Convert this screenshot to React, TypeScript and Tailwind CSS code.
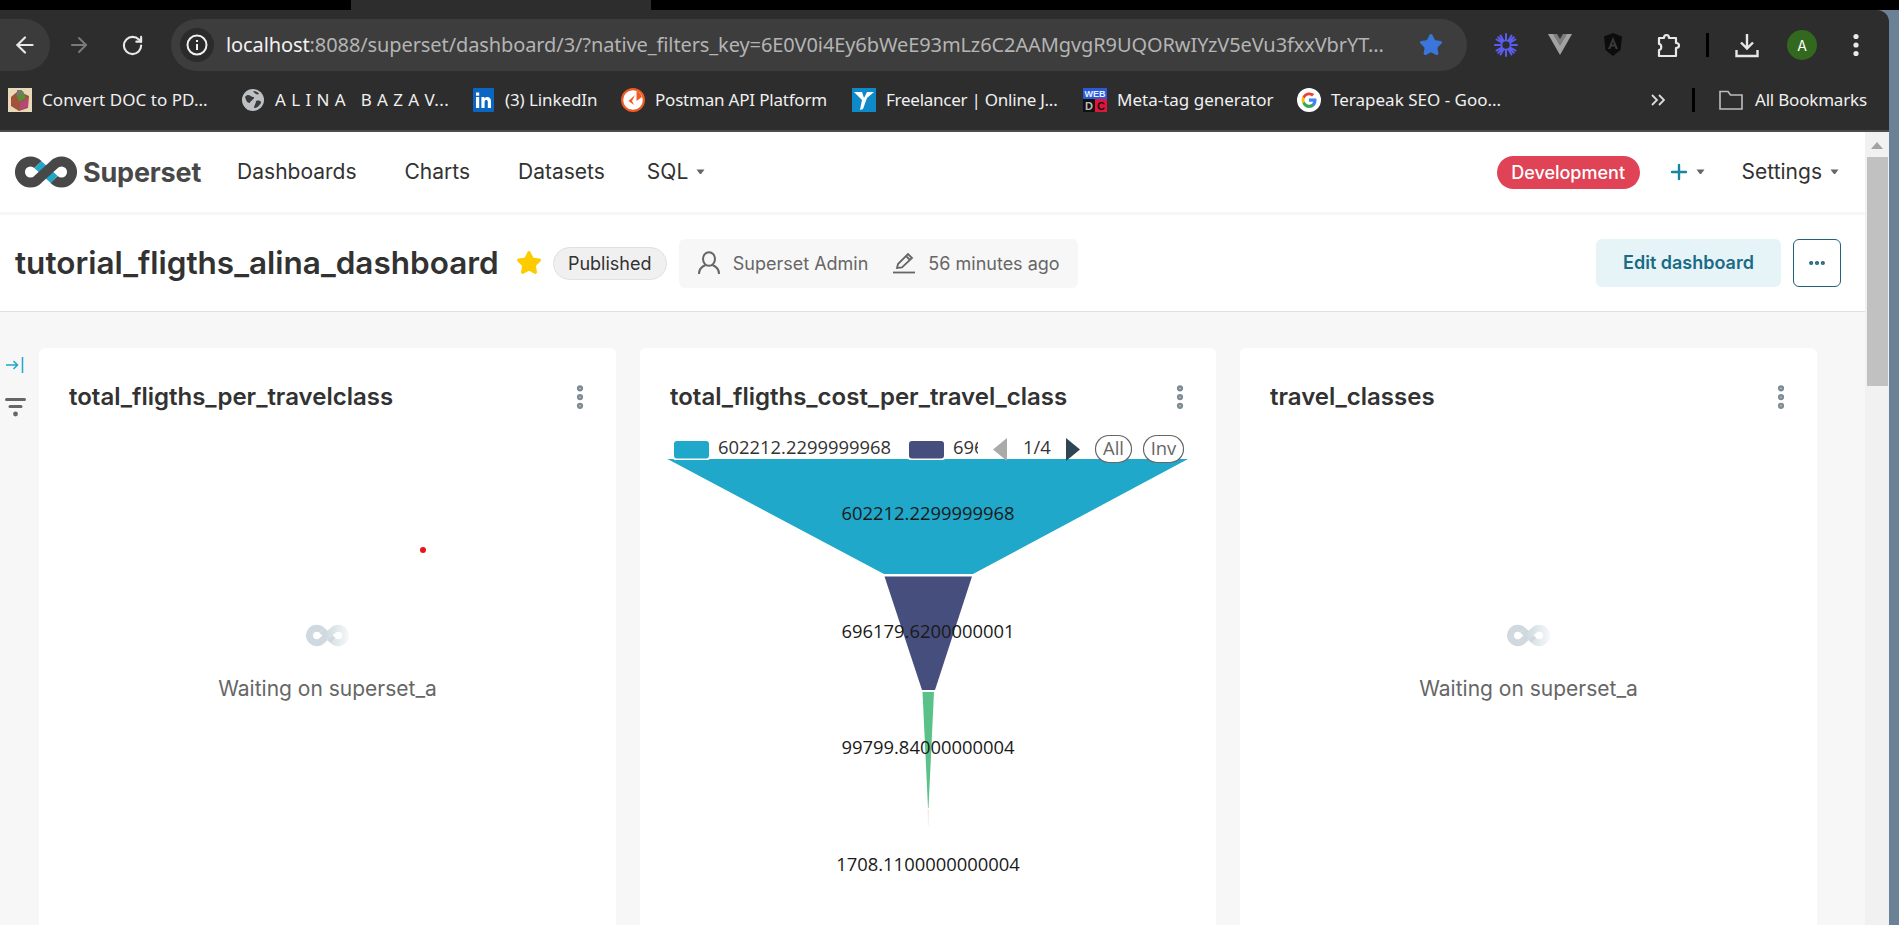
import React from "react";
import { ArrowLeft, ArrowRight, RotateCw, Star, EllipsisVertical, Plus, Ellipsis } from "lucide-react";

const Caret = ({ className = "" }: { className?: string }) => (
  <svg width="9" height="6" viewBox="0 0 9 6" className={className}>
    <path d="M0.5 0.5 H8.5 L5.5 4.6 Q4.5 5.6 3.5 4.6 Z" fill="#666" />
  </svg>
);

const Logo = ({ w, h, fade, id }: { w: number; h: number; fade?: boolean; id: string }) => (
  <svg width={w} height={h} viewBox="0 0 62 32" className="shrink-0">
    <defs>
      <linearGradient id={id} x1="0" x2="62" y1="0" y2="0" gradientUnits="userSpaceOnUse">
        <stop offset="0.45" stopColor="#cfd9df" />
        <stop offset="1" stopColor="#f6f8f9" />
      </linearGradient>
    </defs>
    <path d="M22.9 8.6 L39.1 23.4" stroke={fade ? "#cfd9df" : "#20a7c9"} strokeWidth="10" fill="none" />
    <path
      d="M22.9 8.6 A10.5 10.5 0 1 0 22.9 23.4 L39.1 8.6 A10.5 10.5 0 1 1 39.1 23.4"
      stroke={fade ? `url(#${id})` : "#484848"}
      strokeWidth="10"
      fill="none"
    />
  </svg>
);

const Bookmark = ({ icon, text, className, textClass = "tracking-[-0.1px]" }: { icon: React.ReactNode; text: string; className: string; textClass?: string }) => (
  <div className={`flex items-center shrink-0 ${className}`}>
    <span className="w-[24px] h-[24px] shrink-0 flex items-center justify-center">{icon}</span>
    <span className={`ml-[10px] text-[17px] text-[#f0f0f0] whitespace-pre font-['Noto_Sans',sans-serif] ${textClass}`}>{text}</span>
  </div>
);

const DocIcon = () => (
  <svg width="24" height="24" viewBox="0 0 24 24">
    <rect width="24" height="24" fill="#e8d9b8" />
    <path d="M3 9 L10 3 L21 8 L20 20 L11 23 L3 18 Z" fill="#a0523a" />
    <path d="M8 6 L15 3 L18 10 L11 14 Z" fill="#5b8d3a" />
    <path d="M12 15 L20 10 L20 19 L12 22 Z" fill="#b5477a" />
    <path d="M9 2 h5 v5 h-5z" fill="#777" />
  </svg>
);
const GlobeIcon = () => (
  <svg width="22" height="22" viewBox="0 0 22 22">
    <circle cx="11" cy="11" r="11" fill="#bdc1c6" />
    <path d="M3 8 C7 3 9 9 12 8 C13 10 8 12 8 14 C5 14 4 11 3 8Z M14 12 C18 11 19 12 19 14 C17 17 15 19 12 19 C12 16 14 15 14 12Z M11 2 C13 2 16 3 17 5 C15 6 13 5 11 2Z" fill="#3a3a3a" />
  </svg>
);
const LinkedIcon = () => (
  <svg width="21" height="24" viewBox="0 0 21 24">
    <rect width="21" height="24" rx="1" fill="#0a66c2" />
    <rect x="3" y="9" width="3.2" height="11" fill="#fff" />
    <rect x="3" y="4.5" width="3.2" height="3.2" fill="#fff" />
    <path d="M8.4 9 h3 v1.6 c1.8 -2.6 6.6 -2 6.6 2.6 V20 h-3.2 v-6 c0 -2.6 -3.2 -2.4 -3.2 0 v6 h-3.2z" fill="#fff" />
  </svg>
);
const PostmanIcon = () => (
  <svg width="24" height="24" viewBox="0 0 24 24">
    <circle cx="12" cy="12" r="12" fill="#ef5b25" />
    <circle cx="12" cy="12" r="9.8" fill="#fff" />
    <path d="M15.5 3 A9.6 9.6 0 0 1 21 9 L15.5 13 Z" fill="#ef5b25" />
    <path d="M14 7 L7.5 13 L13 17 L11 13 Z" fill="#ef5b25" />
  </svg>
);
const FreelancerIcon = () => (
  <svg width="24" height="24" viewBox="0 0 24 24">
    <rect width="24" height="24" fill="#0e8ac8" />
    <path d="M2 4 H10 L12 10 L15 4 H22 L15 10 L11 21 L8 22 L10 12 Z" fill="#fff" />
  </svg>
);
const WebIcon = () => (
  <svg width="24" height="24" viewBox="0 0 24 24">
    <rect width="24" height="11" fill="#2a5bd7" />
    <rect y="11" width="12" height="13" fill="#111" />
    <rect x="12" y="11" width="12" height="13" fill="#e0143c" />
    <text x="12" y="9" fontSize="9" fontWeight="700" fill="#e8eeff" textAnchor="middle" fontFamily="Liberation Sans">WEB</text>
    <text x="6" y="22" fontSize="11" fontWeight="700" fill="#bbb" textAnchor="middle" fontFamily="Liberation Sans">D</text>
    <text x="18" y="22" fontSize="11" fontWeight="700" fill="#111" textAnchor="middle" fontFamily="Liberation Sans">C</text>
  </svg>
);
const GoogleIcon = () => (
  <svg width="24" height="24" viewBox="0 0 24 24">
    <circle cx="12" cy="12" r="12" fill="#fff" />
    <path d="M19.5 12.2c0-.6-.1-1.1-.2-1.6H12v3.1h4.2a3.6 3.6 0 0 1-1.6 2.4v2h2.6c1.5-1.4 2.3-3.4 2.3-5.9z" fill="#4285f4" />
    <path d="M12 20c2.2 0 4-.7 5.2-1.9l-2.6-2c-.7.5-1.5.7-2.6.7-2 0-3.7-1.4-4.3-3.2H5.6v2.1A8 8 0 0 0 12 20z" fill="#34a853" />
    <path d="M7.7 13.6a4.7 4.7 0 0 1 0-3.2V8.3H5.6a8 8 0 0 0 0 7.4z" fill="#fbbc05" />
    <path d="M12 7.2c1.2 0 2.2.4 3 1.2l2.3-2.3A8 8 0 0 0 5.6 8.3l2.1 2.1C8.3 8.6 10 7.2 12 7.2z" fill="#ea4335" />
  </svg>
);

const Burst = () => (
  <svg width="24" height="24" viewBox="0 0 24 24" stroke="#5a5cf0" strokeWidth="2" strokeLinecap="round" fill="none">
    <circle cx="12" cy="12" r="4.6" strokeWidth="1.8" />
    <path d="M12 1v6M12 17v6M1 12h6M17 12h6M4.2 4.2l4.2 4.2M15.6 15.6l4.2 4.2M19.8 4.2l-4.2 4.2M8.4 15.6l-4.2 4.2M6.5 2.5l2.7 4.8M14.8 16.7l2.7 4.8M17.5 2.5l-2.7 4.8M9.2 16.7l-2.7 4.8M2.5 6.5l4.8 2.7M16.7 14.8l4.8 2.7M21.5 6.5l-4.8 2.7M7.3 14.8l-4.8 2.7" />
  </svg>
);
const VueIcon = () => (
  <svg width="24" height="22" viewBox="0 0 24 22">
    <path d="M0 0 H24 L12 21 Z" fill="#a2a2a2" />
    <path d="M5 0 H19 L12 12 Z" fill="#7c7c7c" />
    <path d="M9 0 H15 L12 5 Z" fill="#333" />
  </svg>
);
const AngularIcon = () => (
  <svg width="20" height="24" viewBox="0 0 20 24">
    <path d="M10 0 L19 3.5 L17.5 17 L10 23 L2.5 17 L1 3.5 Z" fill="#0c0c0c" />
    <path d="M10 4 L15 16 H12.6 L11.6 13.5 H8.4 L7.4 16 H5 Z M10 8.5 L9 11.5 H11 Z" fill="#3a3a3a" fillRule="evenodd" />
  </svg>
);
const PuzzleIcon = () => (
  <svg width="25" height="25" viewBox="0 0 25 25" fill="none" stroke="#e8e8e8" strokeWidth="2.2" strokeLinejoin="round">
    <path d="M3 5 H8 C8 1 13 1 13 5 H20 V10 C24 10 24 15 20 15 V23 H3 V17 C6 17 6 11 3 11 Z" />
  </svg>
);
const DownloadIcon = () => (
  <svg width="24" height="25" viewBox="0 0 24 25" fill="none" stroke="#e8e8e8" strokeWidth="2.4">
    <path d="M12 1 V15 M6 9.5 L12 15.5 L18 9.5" />
    <path d="M1.5 17 V23 H22.5 V17" />
  </svg>
);
const FolderIcon = () => (
  <svg width="24" height="20" viewBox="0 0 24 20" fill="none" stroke="#bdbdbd" strokeWidth="1.6">
    <path d="M1 1.5 H9 L11.5 5 H23 V19 H1 Z" />
  </svg>
);
const ChevronsIcon = () => (
  <svg width="14" height="12" viewBox="0 0 14 12" fill="none" stroke="#dcdcdc" strokeWidth="1.8">
    <path d="M1 1 L6 6 L1 11 M8 1 L13 6 L8 11" />
  </svg>
);

const ExpandIcon = () => (
  <svg width="18" height="16" viewBox="0 0 18 16" fill="none" stroke="#20a7c9" strokeWidth="1.5">
    <path d="M0 8 H11 M7.5 4 L11.5 8 L7.5 12" />
    <path d="M16.5 0 V16" />
  </svg>
);
const FilterIcon = () => (
  <svg width="21" height="19" viewBox="0 0 21 19" fill="#666">
    <rect width="21" height="3" rx="1.5" />
    <rect x="3.5" y="7" width="14" height="3" rx="1.5" />
    <circle cx="10.5" cy="16" r="2.4" />
  </svg>
);
const UserIcon = () => (
  <svg width="22" height="24" viewBox="0 0 22 24" fill="none" stroke="#666" strokeWidth="2">
    <ellipse cx="11" cy="8" rx="6" ry="6.8" />
    <path d="M1 23 C1 17 5 15 7.5 14 M21 23 C21 17 17 15 14.5 14" />
  </svg>
);
const PencilIcon = () => (
  <svg width="22" height="22" viewBox="0 0 22 22" fill="none" stroke="#666" strokeWidth="1.8">
    <path d="M4 16 L5 12 L15 2 L19 6 L9 15.5 Z M13 4 L17 8" />
    <path d="M0 20.5 H22" />
  </svg>
);

const CardHead = ({ title }: { title: string }) => (
  <div className="flex items-center justify-between h-[24px] pl-[30px] pr-[24px] mt-[37px]">
    <span className="text-[24px] font-semibold text-[#323232] leading-none whitespace-nowrap">{title}</span>
    <EllipsisVertical size={30} color="#7d8b93" strokeWidth={3} className="mr-[-3px]" />
  </div>
);

const Waiting = ({ id }: { id: string }) => (
  <div className="flex flex-col items-center mt-[215px]">
    <Logo w={43} h={23} fade id={id} />
    <span className="mt-[28px] text-[21px] text-[#666] leading-[28px] whitespace-nowrap">Waiting on superset_a</span>
  </div>
);

const Funnel = () => (
  <svg width="576" height="480" viewBox="640 430 576 480" className="block" fontFamily="Open Sans, Noto Sans, sans-serif">
    <polygon points="667.5,458 1188,458 973,573 884,573" fill="#1fa8c9" />
    <polygon points="884.5,575.5 972,575.5 935,689 922,689" fill="#454e7c" />
    <polygon points="922.5,691 934,691 928.5,807 928,807" fill="#5ac189" />
    <polygon points="927.5,808.5 929,808.5 928.4,825 928.1,825" fill="#fde3dc" />
    <rect x="672" y="438" width="39" height="21" rx="4" fill="#fff" />
    <rect x="674" y="440" width="35" height="17.5" rx="3" fill="#1fa8c9" />
    <rect x="907" y="438" width="39" height="21" rx="4" fill="#fff" />
    <rect x="909" y="440" width="35" height="17.5" rx="3" fill="#454e7c" />
    <text x="718" y="453" fontSize="18.4" fill="#333">602212.2299999968</text>
    <svg x="953" y="435" width="25" height="24" viewBox="953 435 25 24">
      <text x="953" y="453" fontSize="18.4" fill="#333">696179</text>
    </svg>
    <polygon points="1007,437 1007,460 993,448.5" fill="#aaa" />
    <text x="1037" y="453" fontSize="18.4" fill="#333" textAnchor="middle">1/4</text>
    <polygon points="1066,437 1066,460 1080,448.5" fill="#2f4554" />
    <rect x="1095.5" y="434.5" width="36" height="27" rx="13.5" fill="#fff" stroke="#666" strokeWidth="1.2" />
    <text x="1113.5" y="454" fontSize="18.4" fill="#666" textAnchor="middle">All</text>
    <rect x="1143.5" y="434.5" width="40" height="27" rx="13.5" fill="#fff" stroke="#666" strokeWidth="1.2" />
    <text x="1163.5" y="454" fontSize="18.4" fill="#666" textAnchor="middle">Inv</text>
    <text x="928" y="519" fontSize="18.4" fill="#1a1a1a" textAnchor="middle">602212.2299999968</text>
    <text x="928" y="637" fontSize="18.4" fill="#1a1a1a" textAnchor="middle">696179.6200000001</text>
    <text x="928" y="753" fontSize="18.4" fill="#1a1a1a" textAnchor="middle">99799.84000000004</text>
    <text x="928" y="870" fontSize="18.4" fill="#1a1a1a" textAnchor="middle">1708.1100000000004</text>
  </svg>
);

export default function App() {
  return (
    <div className="w-[1899px] h-[925px] overflow-hidden flex flex-col bg-black font-['Inter',sans-serif]">
      <div className="h-[10px] shrink-0 flex bg-black">
        <div className="ml-[351px] w-[300px] bg-[#2d2d2d]" />
      </div>
      <div className="flex flex-1 min-h-0 bg-[#6b8196]">
        <div className="w-[1889px] flex flex-col min-w-0">
          {/* browser chrome */}
          <div className="h-[122px] shrink-0 bg-[#2d2d2d] rounded-tr-[12px] border-b-[2px] border-[#4c4c4c] flex flex-col">
            <div className="h-[70px] flex items-center">
              <div className="w-[50px] h-[52px] bg-[#3b3b3b] rounded-r-[26px] flex items-center justify-center shrink-0">
                <ArrowLeft size={26} color="#e8e8e8" strokeWidth={2} />
              </div>
              <ArrowRight size={24} color="#7a7a7a" strokeWidth={2} className="ml-[17px] shrink-0" />
              <RotateCw size={23} color="#e8e8e8" strokeWidth={2.2} className="ml-[30px] shrink-0" />
              <div className="ml-[27px] w-[1296px] h-[52px] bg-[#3d3d3d] rounded-[26px] flex items-center pl-[9px] shrink-0">
                <div className="w-[34px] h-[34px] rounded-full bg-[#2b2b2b] flex items-center justify-center shrink-0">
                  <svg width="22" height="22" viewBox="0 0 22 22" fill="none" stroke="#f0f0f0" strokeWidth="2">
                    <circle cx="11" cy="11" r="9.5" />
                    <path d="M11 10 V16 M11 6 V8" />
                  </svg>
                </div>
                <div className="ml-[12px] w-[1163px] text-[20px] whitespace-nowrap overflow-hidden font-['Noto_Sans',sans-serif] tracking-[-0.1px]">
                  <span className="text-[#f2f2f2]">localhost</span>
                  <span className="text-[#b4b4b4]">:8088/superset/dashboard/3/?native_filters_key=6E0V0i4Ey6bWeE93mLz6C2AAMgvgR9UQORwIYzV5eVu3fxxVbrYT...</span>
                </div>
                <Star size={24} fill="#3a76dc" color="#3a76dc" className="ml-[30px] shrink-0" />
              </div>
              <span className="ml-[27px] shrink-0 flex"><Burst /></span>
              <span className="ml-[30px] shrink-0 flex"><VueIcon /></span>
              <span className="ml-[31px] shrink-0 flex"><AngularIcon /></span>
              <span className="ml-[33px] shrink-0 flex"><PuzzleIcon /></span>
              <div className="ml-[25px] w-[3px] h-[24px] bg-black shrink-0" />
              <span className="ml-[26px] shrink-0 flex"><DownloadIcon /></span>
              <div className="ml-[28px] w-[30px] h-[30px] rounded-full bg-[#33691e] text-white text-[14px] flex items-center justify-center shrink-0">A</div>
              <svg width="6" height="24" viewBox="0 0 6 24" fill="#e8e8e8" className="ml-[36px] shrink-0">
                <circle cx="3" cy="3.5" r="2.6" /><circle cx="3" cy="12" r="2.6" /><circle cx="3" cy="20.5" r="2.6" />
              </svg>
            </div>
            <div className="flex-1 flex items-center pl-[8px] pb-[10px]">
              <Bookmark className="w-[233px]" icon={<DocIcon />} text="Convert DOC to PD..." textClass="tracking-[0.05px]" />
              <Bookmark className="w-[230px]" icon={<GlobeIcon />} text="A L I N A   B A Z A V..." textClass="tracking-[0.45px]" />
              <Bookmark className="w-[150px]" icon={<LinkedIcon />} text="(3) LinkedIn" />
              <Bookmark className="w-[231px]" icon={<PostmanIcon />} text="Postman API Platform" textClass="tracking-[-0.2px]" />
              <Bookmark className="w-[231px]" icon={<FreelancerIcon />} text="Freelancer | Online J..." textClass="tracking-[-0.25px]" />
              <Bookmark className="w-[214px]" icon={<WebIcon />} text="Meta-tag generator" textClass="tracking-[0px]" />
              <Bookmark className="w-[354px]" icon={<GoogleIcon />} text="Terapeak SEO - Goo..." textClass="tracking-[0px]" />
              <span className="w-[41px] flex shrink-0"><ChevronsIcon /></span>
              <div className="w-[3px] h-[24px] bg-black shrink-0" />
              <span className="ml-[24px] flex shrink-0"><FolderIcon /></span>
              <span className="ml-[12px] text-[17px] text-[#f0f0f0] whitespace-nowrap font-['Noto_Sans',sans-serif] tracking-[-0.2px]">All Bookmarks</span>
            </div>
          </div>

          {/* page */}
          <div className="flex flex-1 min-h-0">
            <div className="w-[1865px] flex flex-col min-h-0 bg-[#f7f7f7]">
              <nav className="h-[80px] shrink-0 bg-white flex items-center border-b-[3px] border-[#f7f7f7] box-content">
                <div className="ml-[15px] flex items-center">
                  <Logo w={62} h={32} id="lg1" />
                  <span className="ml-[6px] text-[27px] font-bold text-[#484848] leading-none tracking-[-0.2px]">Superset</span>
                </div>
                <span className="ml-[36px] text-[21px] text-[#323232]">Dashboards</span>
                <span className="ml-[48px] text-[21px] text-[#323232]">Charts</span>
                <span className="ml-[48px] text-[21px] text-[#323232]">Datasets</span>
                <span className="ml-[42px] text-[21px] text-[#323232]">SQL</span>
                <Caret className="ml-[8px]" />
                <div className="ml-auto flex items-center pr-[26px]">
                  <span className="w-[143px] h-[33px] rounded-full bg-[#e04355] text-white text-[18px] font-medium flex items-center justify-center">Development</span>
                  <Plus size={24} color="#1a85a0" strokeWidth={2.4} className="ml-[27px]" />
                  <Caret className="ml-[5px]" />
                  <span className="ml-[37px] text-[21px] text-[#323232]">Settings</span>
                  <Caret className="ml-[8px]" />
                </div>
              </nav>
              <header className="h-[97px] shrink-0 bg-white border-b border-[#e0e0e0] flex items-center pl-[15px] pr-[24px]">
                <h1 className="text-[31.5px] font-semibold text-[#323232] leading-none whitespace-nowrap">tutorial_fligths_alina_dashboard</h1>
                <Star size={26} fill="#fccb00" color="#fccb00" className="ml-[17px] shrink-0" />
                <span className="ml-[11px] w-[114px] h-[33px] rounded-full bg-[#f0f0f0] border border-[#e0e0e0] text-[18px] text-[#323232] flex items-center justify-center">Published</span>
                <div className="ml-[12px] w-[399px] h-[49px] rounded-[6px] bg-[#f7f7f7] flex items-center pl-[19px]">
                  <UserIcon />
                  <span className="ml-[13px] text-[18px] text-[#666] whitespace-nowrap">Superset Admin</span>
                  <span className="ml-[25px] flex"><PencilIcon /></span>
                  <span className="ml-[13px] text-[18px] text-[#666] whitespace-nowrap">56 minutes ago</span>
                </div>
                <button className="ml-auto w-[185px] h-[48px] rounded-[6px] bg-[#e6f4f8] text-[18px] font-semibold text-[#1a6b85] pb-[2px]">Edit dashboard</button>
                <button className="ml-[12px] w-[48px] h-[48px] rounded-[6px] border border-[#20627a] flex items-center justify-center">
                  <Ellipsis size={20} color="#20627a" strokeWidth={3} />
                </button>
              </header>
              <div className="flex-1 min-h-0 flex overflow-hidden">
                <div className="w-[39px] shrink-0 flex flex-col items-start pt-[45px] pl-[5px]">
                  <span className="flex ml-[1px]"><ExpandIcon /></span>
                  <span className="mt-[25px] flex"><FilterIcon /></span>
                </div>
                <div className="flex gap-[24px] pt-[36px] flex-1 min-w-0">
                  <section className="relative w-[577px] bg-white rounded-t-[6px] overflow-hidden">
                    <CardHead title="total_fligths_per_travelclass" />
                    <Waiting id="w1" />
                    <span className="absolute left-[381px] top-[199px] w-[6px] h-[6px] rounded-full bg-[#e8141c]" />
                  </section>
                  <section className="w-[576px] bg-white rounded-t-[6px] overflow-hidden">
                    <CardHead title="total_fligths_cost_per_travel_class" />
                    <div className="mt-[22px]"><Funnel /></div>
                  </section>
                  <section className="w-[577px] bg-white rounded-t-[6px] overflow-hidden">
                    <CardHead title="travel_classes" />
                    <Waiting id="w3" />
                  </section>
                </div>
              </div>
            </div>
            <div className="w-[24px] shrink-0 bg-[#f1f1f1] flex flex-col items-center">
              <svg width="12" height="8" viewBox="0 0 12 8" className="mt-[10px] shrink-0"><path d="M6 0 L12 7 H0 Z" fill="#a3a3a3" /></svg>
              <div className="mt-[7px] w-[21px] h-[229px] bg-[#c1c1c1]" />
            </div>
          </div>
        </div>
      </div>
    </div>
  );
}
